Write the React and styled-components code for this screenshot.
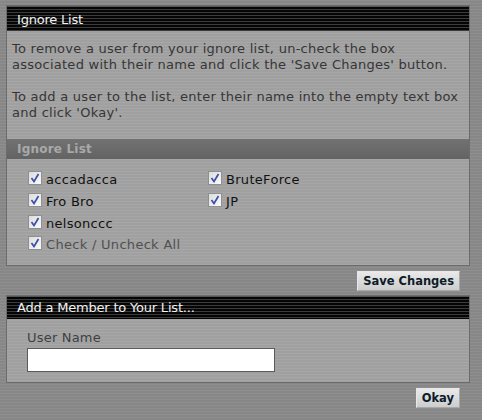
import styled, { createGlobalStyle } from "styled-components";

const GlobalStyle = createGlobalStyle`
  html, body {
    margin: 0;
    padding: 0;
  }
  body {
    width: 482px;
    height: 420px;
    overflow: hidden;
    background-color: #8b8b8b;
    background-image: repeating-linear-gradient(
      to bottom,
      rgba(255, 255, 255, 0.03) 0 1px,
      rgba(0, 0, 0, 0.03) 1px 3px
    );
    font-family: "DejaVu Sans", Verdana, sans-serif;
  }
`;

const Page = styled.div`
  padding: 5px 12px 0 6px;
  display: flex;
  flex-direction: column;
`;

const Panel = styled.div`
  border: 1px solid #6c6c6c;
  background-color: #a3a3a3;
  background-image: repeating-linear-gradient(
    to bottom,
    rgba(255, 255, 255, 0.04) 0 1px,
    rgba(0, 0, 0, 0.02) 1px 3px
  );
`;

const Header = styled.div`
  height: ${(p) => p.$h || 23}px;
  display: flex;
  align-items: center;
  padding-left: ${(p) => p.$pad || 10}px;
  border-top: 1px solid #555;
  background: repeating-linear-gradient(
    to bottom,
    #050505 0 2px,
    #3c3c3c 2px 3px
  );
  color: #f2f2f2;
  font-size: 13px;
  font-family: Tahoma, "DejaVu Sans", sans-serif;
  letter-spacing: -0.2px;
`;

const Intro = styled.div`
  padding: 10px 0 18px 5px;
  color: #363636;
  font-size: 13px;
  letter-spacing: 0.26px;
  line-height: 16px;
`;

const Para = styled.p`
  margin: 0 0 16px 0;
  &:last-child {
    margin-bottom: 0;
  }
`;

const SubHeader = styled.div`
  height: 20px;
  display: flex;
  align-items: center;
  padding-left: 10px;
  background: linear-gradient(to bottom, #727272, #636363);
  color: #a9a9a9;
  font-weight: bold;
  font-size: 12px;
  letter-spacing: 0.2px;
`;

const List = styled.div`
  display: grid;
  grid-template-columns: 180px 180px;
  grid-auto-rows: 21.7px;
  padding: 10px 0 9px 21px;
`;

const Item = styled.label`
  display: flex;
  align-items: center;
  gap: 4px;
  font-size: 13px;
  letter-spacing: 0.3px;
  color: ${(p) => (p.$muted ? "#505050" : "#111")};
  grid-column: ${(p) => p.$col || "auto"};
`;

const Box = styled.span`
  width: 12px;
  height: 12px;
  border: 1px solid #8e8f8f;
  background: linear-gradient(135deg, #dcdcdc, #fafafa);
  display: inline-flex;
  align-items: center;
  justify-content: center;
  margin-top: -3px;
`;

const Actions = styled.div`
  display: flex;
  justify-content: flex-end;
  padding: ${(p) => p.$pad};
`;

const Button = styled.button`
  height: 20px;
  padding: 0 5px;
  border: 1px solid #a8a8a8;
  border-top-color: #e8e8e8;
  border-left-color: #e8e8e8;
  background: linear-gradient(to bottom, #e9e9e9, #cdcdcd);
  color: #0d1b2a;
  font-family: "DejaVu Sans", Tahoma, sans-serif;
  font-weight: bold;
  font-size: 11.5px;
  cursor: pointer;
`;

const Form = styled.div`
  padding: 11px 20px 10px 20px;
  display: flex;
  flex-direction: column;
  gap: 3px;
`;

const Label = styled.span`
  color: #404040;
  font-size: 13px;
  letter-spacing: 0.2px;
`;

const Input = styled.input`
  width: 248px;
  height: 24px;
  box-sizing: border-box;
  border: 1px solid #5a5a5a;
  background: #fff;
  padding: 2px 4px;
  font-family: inherit;
  font-size: 12px;
`;

const Check = () => (
  <Box>
    <svg width="10" height="10" viewBox="0 0 10 10">
      <path d="M1.5 5 L4 8.5 L8.5 1" fill="none" stroke="#3b4fa8" strokeWidth="1.7" />
    </svg>
  </Box>
);

const users = [
  { name: "accadacca" },
  { name: "BruteForce" },
  { name: "Fro Bro" },
  { name: "JP" },
  { name: "nelsonccc" },
];

export default function App() {
  return (
    <>
      <GlobalStyle />
      <Page>
        <Panel>
          <Header $h={24}>Ignore List</Header>
          <Intro>
            <Para>
              To remove a user from your ignore list, un-check the box
              associated with their name and click the 'Save Changes' button.
            </Para>
            <Para>
              To add a user to the list, enter their name into the empty text
              box and click 'Okay'.
            </Para>
          </Intro>
          <SubHeader>Ignore List</SubHeader>
          <List>
            {users.map((u) => (
              <Item key={u.name}>
                <Check />
                {u.name}
              </Item>
            ))}
            <Item $col="1" $muted>
              <Check />
              Check / Uncheck All
            </Item>
          </List>
        </Panel>
        <Actions $pad="5px 10px 4px 0">
          <Button>Save Changes</Button>
        </Actions>
        <Panel>
          <Header $h={22} $pad={10}>Add a Member to Your List...</Header>
          <Form>
            <Label>User Name</Label>
            <Input type="text" />
          </Form>
        </Panel>
        <Actions $pad="5px 10px 0 0">
          <Button>Okay</Button>
        </Actions>
      </Page>
    </>
  );
}
